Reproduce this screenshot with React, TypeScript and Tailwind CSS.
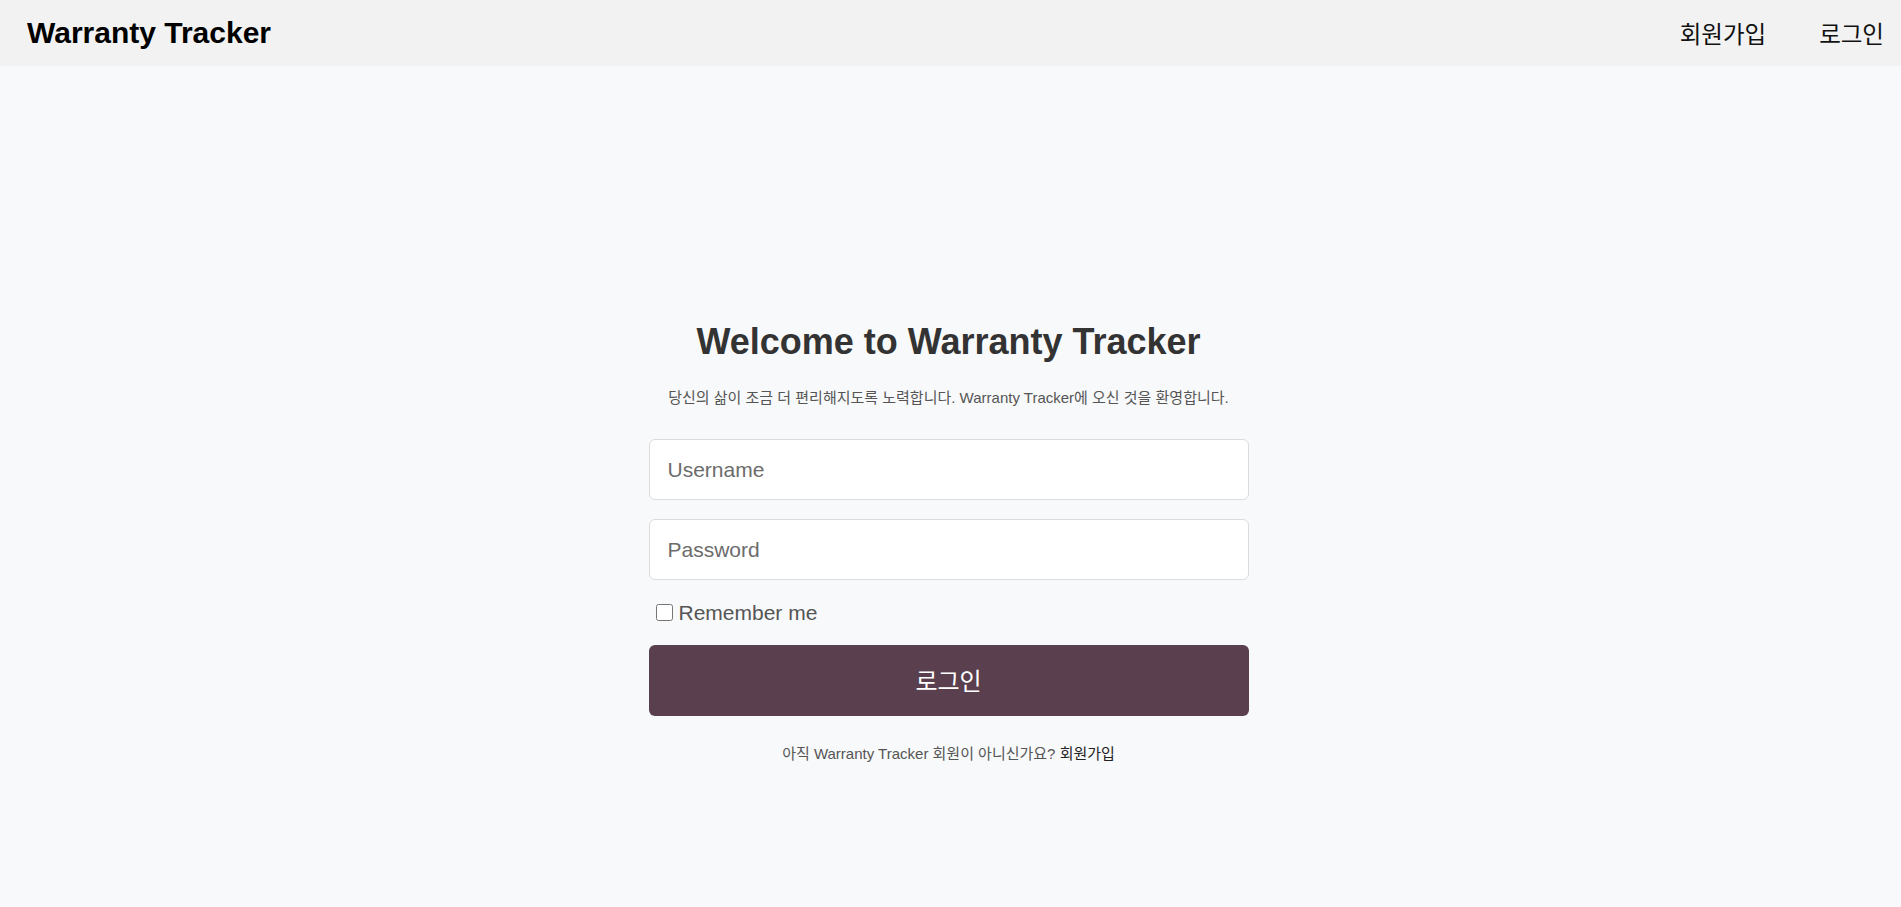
export default function App() {
    return (
        <div className="min-h-screen bg-[#f8f9fa] font-['Liberation_Sans','Noto_Sans_CJK_KR',sans-serif]">
            <header className="h-[66px] bg-[#f2f2f2] flex items-center justify-between pl-[27px] pr-[17px]">
                <div className="text-[30px] font-bold text-black leading-none">Warranty Tracker</div>
                <nav className="flex items-center gap-[53px] pt-[6px] text-[23.5px] text-[#111] leading-none">
                    <a href="#">회원가입</a>
                    <a href="#">로그인</a>
                </nav>
            </header>

            <main className="flex flex-col items-center pt-[254px] pr-[4px] pb-16">
                <h1 className="text-[36px] font-bold text-[#333] leading-[44px]">
                    Welcome to Warranty Tracker
                </h1>
                <p className="mt-[24px] text-[15px] leading-[20px] text-[#555]">
                    당신의 삶이 조금 더 편리해지도록 노력합니다. Warranty Tracker에 오신 것을 환영합니다.
                </p>

                <form className="mt-[31px] w-[600px] flex flex-col" onSubmit={(e) => e.preventDefault()}>
                    <input
                        type="text"
                        placeholder="Username"
                        className="h-[61px] w-full rounded-[6px] border border-[#dcdcdc] bg-white px-[18px] text-[21px] text-[#333] placeholder:text-[#6c6c6c] outline-none"
                    />
                    <input
                        type="password"
                        placeholder="Password"
                        className="mt-[19px] h-[61px] w-full rounded-[6px] border border-[#dcdcdc] bg-white px-[18px] text-[21px] text-[#333] placeholder:text-[#6c6c6c] outline-none"
                    />
                    <label className="mt-[20px] h-[24px] flex items-center gap-[6px] pl-[7px] text-[21px] text-[#555] leading-none">
                        <input type="checkbox" className="w-[17px] h-[17px] m-0" />
                        Remember me
                    </label>
                    <button
                        type="submit"
                        className="mt-[21px] h-[71px] w-full rounded-[6px] bg-[#5a404f] pt-[2px] text-white text-[24px]"
                    >
                        로그인
                    </button>
                </form>

                <p className="mt-[28px] text-[15px] leading-[20px] text-[#555]">
                    아직 Warranty Tracker 회원이 아니신가요?{' '}
                    <a href="#" className="text-[#222]">회원가입</a>
                </p>
            </main>
        </div>
    )
}
